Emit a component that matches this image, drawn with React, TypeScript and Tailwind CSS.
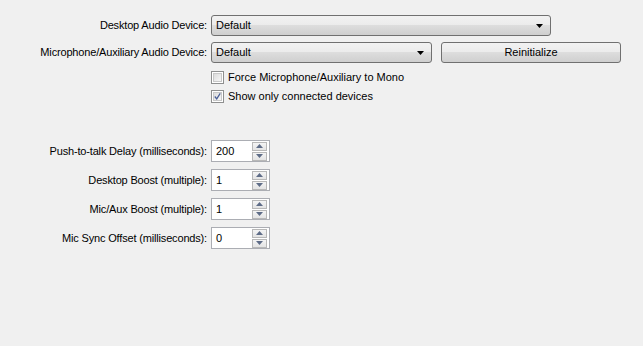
import React from "react";

const font = { fontFamily: "'Liberation Sans', Arial, sans-serif" };

function Combo({ w }: { w: string }) {
  return (
    <div className={`${w} h-[21px] rounded-[3px] border border-[#707070] bg-[linear-gradient(#f2f2f2_0%,#ebebeb_50%,#dddddd_50%,#cfcfcf_100%)] flex items-center justify-between pl-[4px] pr-[7px]`}>
      <span className="text-black">Default</span>
      <svg width="7" height="4" viewBox="0 0 7 4"><path d="M0 0h7L3.5 4z" fill="#000" /></svg>
    </div>
  );
}

function Checkbox({ checked, label }: { checked?: boolean; label: string }) {
  return (
    <div className="flex items-center h-[19px]">
      <div className="w-[13px] h-[13px] border border-[#8e8f8f] bg-white p-[1px]">
        <div className="w-full h-full border border-[#c8c8c8] bg-[linear-gradient(135deg,#dcdcdc,#f6f6f6)] flex items-center justify-center">
          {checked && (
            <svg width="9" height="9" viewBox="0 0 9 9">
              <path d="M1 4.5 L3.5 7.5 L8 0.5" stroke="#4a5f97" strokeWidth="1.6" fill="none" />
            </svg>
          )}
        </div>
      </div>
      <span className="ml-[4px] text-black">{label}</span>
    </div>
  );
}

function Spin({ value }: { value: string }) {
  return (
    <div className="w-[59px] h-[22px] border border-[#abadb3] bg-white flex items-center justify-between pl-[4px] pr-[2px]">
      <span className="text-black">{value}</span>
      <div className="flex flex-col gap-[1px]">
        {[0, 1].map((i) => (
          <div key={i} className="w-[15px] h-[9px] border border-[#b8b8b8] bg-[linear-gradient(#f4f4f4,#e4e4e4)] flex items-center justify-center">
            <svg width="7" height="4" viewBox="0 0 7 4">
              <path d={i === 0 ? "M0 4h7L3.5 0z" : "M0 0h7L3.5 4z"} fill="#5e6c87" />
            </svg>
          </div>
        ))}
      </div>
    </div>
  );
}

function Label({ children }: { children: React.ReactNode }) {
  return <div className="w-[208px] shrink-0 text-right pr-[1px] text-[#000] tracking-[-0.17px]">{children}</div>;
}

export default function App() {
  return (
    <div className="w-[643px] h-[346px] bg-[#f0f0f0] text-[11px] leading-none" style={font}>
      <div className="flex flex-col pt-[15px]">
        <div className="flex items-center">
          <Label>Desktop Audio Device:</Label>
          <div className="ml-[3px]"><Combo w="w-[340px]" /></div>
        </div>
        <div className="flex items-center mt-[6px]">
          <Label>Microphone/Auxiliary Audio Device:</Label>
          <div className="ml-[3px]"><Combo w="w-[221px]" /></div>
          <button className="ml-[9px] w-[180px] h-[21px] rounded-[3px] border border-[#707070] bg-[linear-gradient(#f2f2f2_0%,#ebebeb_50%,#dddddd_50%,#cfcfcf_100%)] text-black">
            Reinitialize
          </button>
        </div>
        <div className="ml-[211px] mt-[5px] flex flex-col">
          <Checkbox label="Force Microphone/Auxiliary to Mono" />
          <Checkbox checked label="Show only connected devices" />
        </div>
        <div className="flex flex-col gap-[7px] mt-[34px]">
          {[
            ["Push-to-talk Delay (milliseconds):", "200"],
            ["Desktop Boost (multiple):", "1"],
            ["Mic/Aux Boost (multiple):", "1"],
            ["Mic Sync Offset (milliseconds):", "0"],
          ].map(([l, v]) => (
            <div key={l} className="flex items-center">
              <Label>{l}</Label>
              <div className="ml-[3px]"><Spin value={v} /></div>
            </div>
          ))}
        </div>
      </div>
    </div>
  );
}
